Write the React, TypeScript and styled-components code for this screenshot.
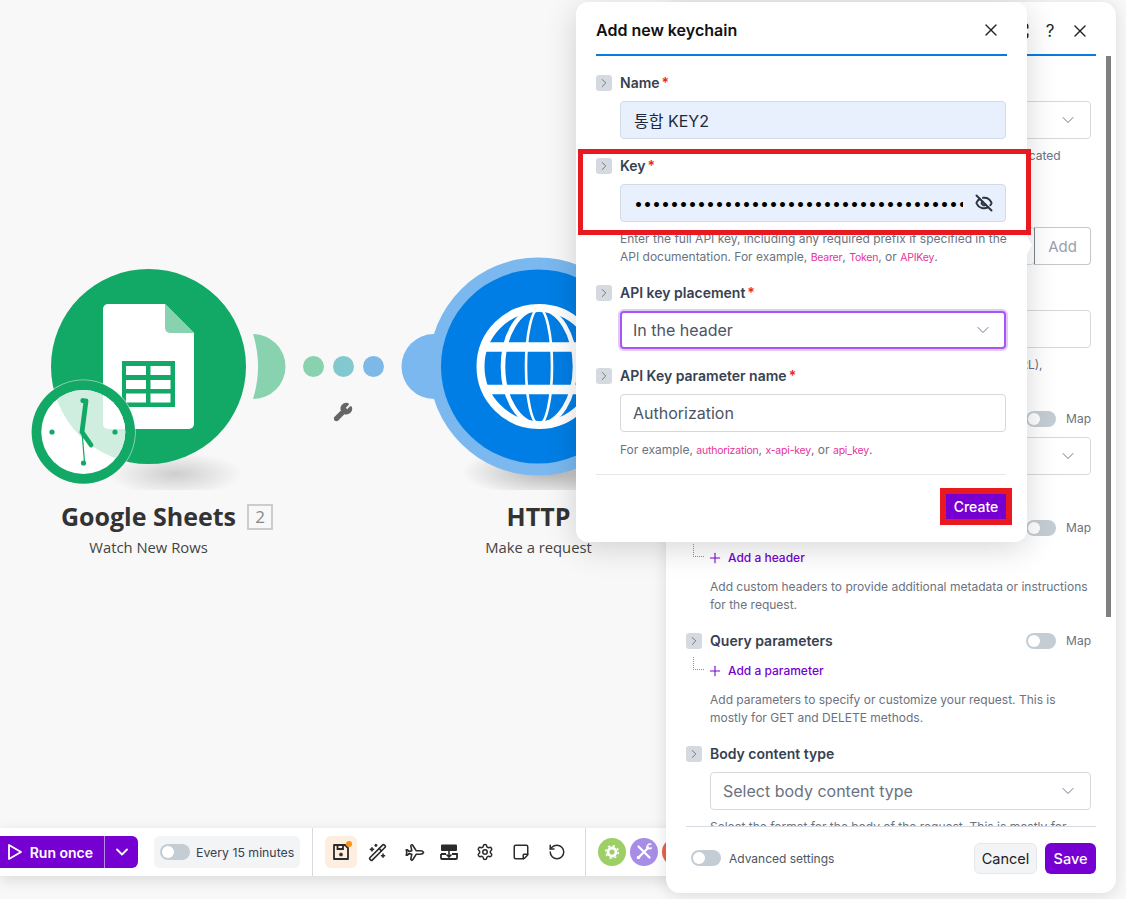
import { ReactNode } from "react";
import styled, { createGlobalStyle } from "styled-components";
import {
  ChevronDown,
  ChevronRight,
  EyeOff,
  Maximize,
  Plane,
  Plus,
  RotateCcw,
  Settings,
  StickyNote,
  WandSparkles,
  Wrench,
  X,
} from "lucide-react";

const purple = "#7600d1";

const GlobalStyle = createGlobalStyle`
  html, body {
    margin: 0;
    padding: 0;
    background: #f8f8f8;
    font-family: Inter, "Noto Sans CJK KR", sans-serif;
  }
`;

const SheetsArt = () => (
  <svg width="280" height="240" viewBox="20 250 280 240">
    <defs>
      <radialGradient id="nodeShadow">
        <stop offset="0%" stopColor="#000" stopOpacity="0.17" />
        <stop offset="100%" stopColor="#000" stopOpacity="0" />
      </radialGradient>
      <clipPath id="clockFace">
        <circle cx="83.3" cy="432" r="42" />
      </clipPath>
    </defs>
    <ellipse cx="175" cy="474" rx="68" ry="22" fill="url(#nodeShadow)" />
    <path d="M253 334 A32.5 32.5 0 0 1 253 399 A109.4 109.4 0 0 0 253 334 Z" fill="#88d2b0" />
    <circle cx="148.5" cy="366.5" r="97.5" fill="#12a865" />
    <path d="M108 304 H165 L194 333 V424 a5 5 0 0 1 -5 5 H108 a5 5 0 0 1 -5 -5 V309 a5 5 0 0 1 5 -5 Z" fill="#fff" />
    <path d="M165 304 L194 333 H170 a5 5 0 0 1 -5 -5 Z" fill="#88d2b0" />
    <rect x="122" y="361" width="53" height="46" fill="#12a865" />
    {[366, 380, 393.5].map((y) =>
      [126, 150.5].map((x) => <rect key={`${x}-${y}`} x={x} y={y} width="20" height="9" fill="#fff" />),
    )}
    <circle cx="83.3" cy="432" r="52.5" fill="#f8f8f8" opacity="0.6" />
    <circle cx="83.3" cy="432" r="51.7" fill="#12a865" />
    <circle cx="83.3" cy="432" r="42" fill="#fff" />
    <g clipPath="url(#clockFace)">
      <circle cx="148.5" cy="366.5" r="97.5" fill="#cfeee0" />
      <path d="M103 390 H194 V429 H108 a5 5 0 0 1 -5 -5 Z" fill="#fff" />
    </g>
    <g fill="#12a865">
      <circle cx="52" cy="432" r="2.6" />
      <circle cx="115" cy="432" r="2.6" />
      <circle cx="83.5" cy="463" r="2.6" />
      <circle cx="83" cy="400.5" r="2.6" />
    </g>
    <g stroke="#12a865" strokeLinecap="round" fill="none">
      <path d="M86 401 L82 432 L91 445" strokeWidth="4.8" />
      <path d="M82 432 L84.5 462" strokeWidth="1.2" />
    </g>
  </svg>
);

const HttpArt = () => (
  <svg width="220" height="240" viewBox="396 250 220 240">
    <defs>
      <radialGradient id="httpShadow">
        <stop offset="0%" stopColor="#000" stopOpacity="0.28" />
        <stop offset="100%" stopColor="#000" stopOpacity="0" />
      </radialGradient>
    </defs>
    <ellipse cx="550" cy="472" rx="88" ry="26" fill="url(#httpShadow)" />
    <circle cx="434" cy="366.5" r="32.5" fill="#7ab8ef" />
    <circle cx="538" cy="366.5" r="109" fill="#7ab8ef" />
    <circle cx="538" cy="366.5" r="97" fill="#007ee5" />
    <g fill="none" stroke="#fff">
      <circle cx="539" cy="366.5" r="58.5" strokeWidth="8" />
      <ellipse cx="539" cy="366.5" rx="13" ry="58" strokeWidth="2.6" />
      <ellipse cx="539" cy="366.5" rx="36" ry="58" strokeWidth="4.6" />
      <path d="M484 347 H594 M484 389.5 H594" strokeWidth="9.5" />
    </g>
  </svg>
);

const FloppyIcon = () => (
  <svg width="20" height="20" viewBox="0 0 20 20" fill="none" stroke="#2b2b2b" strokeWidth="1.8">
    <path d="M3 3 H14 L17 6 V17 H3 Z" strokeLinejoin="round" />
    <path d="M6.5 3 V7 H12 V3" />
    <circle cx="10" cy="12.5" r="1.6" fill="#2b2b2b" strokeWidth="0.6" />
  </svg>
);

const TrayIcon = () => (
  <svg width="20" height="20" viewBox="0 0 20 20" fill="none">
    <rect x="2" y="2.5" width="16" height="6.5" rx="1" fill="#2b2b2b" />
    <path d="M2 12 V16 a1 1 0 0 0 1 1 H17 a1 1 0 0 0 1 -1 V12 H13 M7 12 H2" stroke="#2b2b2b" strokeWidth="1.8" />
    <path d="M10 9 V14.5 M7.5 12.5 L10 15 L12.5 12.5" stroke="#2b2b2b" strokeWidth="1.6" />
  </svg>
);

const GearBadge = () => (
  <svg width="28" height="28" viewBox="0 0 28 28">
    <circle cx="14" cy="14" r="14" fill="#9ccf66" />
    <circle cx="14" cy="14" r="4" fill="none" stroke="#fff" strokeWidth="2.8" />
    <circle cx="14" cy="14" r="6.2" fill="none" stroke="#fff" strokeWidth="1.6" strokeDasharray="2.2 2.67" />
  </svg>
);

const ToolsBadge = () => (
  <svg width="28" height="28" viewBox="0 0 28 28">
    <circle cx="14" cy="14" r="14" fill="#a78de6" />
    <path d="M8.5 8.5 L19.5 19.5 M18.5 9.5 L9 19" stroke="#fff" strokeWidth="2.2" strokeLinecap="round" />
    <path d="M21.5 6.2 a3.4 3.4 0 0 0 -4.4 4.4 M21.8 9.5 a3.4 3.4 0 0 1 -3.4 1.2" fill="none" stroke="#fff" strokeWidth="1.4" />
    <circle cx="8.5" cy="19.5" r="1.8" fill="#fff" />
  </svg>
);

const Toggle = () => (
  <Track>
    <Knob />
  </Track>
);

const FieldHead = ({ label, required, map }: { label?: string; required?: boolean; map?: boolean }) => (
  <HeadRow>
    <ChevronBox>
      <ChevronRight size={14} strokeWidth={1.5} />
    </ChevronBox>
    <Label>
      {label}
      {required && <Star>*</Star>}
    </Label>
    {map && (
      <MapSwitch>
        <Toggle />
        <MapText>Map</MapText>
      </MapSwitch>
    )}
  </HeadRow>
);

const SelectBox = ({ children, focused }: { children?: ReactNode; focused?: boolean }) => (
  <Select $focused={focused}>
    <SelectText>{children}</SelectText>
    <ChevronDown size={20} strokeWidth={1.2} color="#6b7c8f" />
  </Select>
);

const AddRow = ({ text }: { text: string }) => (
  <AddLine>
    <Tree />
    <Plus size={16} color={purple} strokeWidth={1.6} />
    <AddText>{text}</AddText>
  </AddLine>
);

export default function App() {
  return (
    <>
      <GlobalStyle />
      <Stage>
        <NodeBox $x={20} $y={250}>
          <SheetsArt />
        </NodeBox>
        <NodeCaption $center={148.5}>
          <NodeTitle>
            Google Sheets
            <CountBadge>2</CountBadge>
          </NodeTitle>
          <NodeSub>Watch New Rows</NodeSub>
        </NodeCaption>

        <Dots>
          <Dot $color="#88d2b0" />
          <Dot $color="#82c8cf" />
          <Dot $color="#7db9e8" />
        </Dots>
        <WrenchMark>
          <Wrench size={20} color="#666" fill="#666" />
        </WrenchMark>

        <NodeBox $x={396} $y={250}>
          <HttpArt />
        </NodeBox>
        <NodeCaption $center={538.5}>
          <NodeTitle>HTTP</NodeTitle>
          <NodeSub>Make a request</NodeSub>
        </NodeCaption>

        <Toolbar>
          <RunGroup>
            <RunMain>
              <svg width="18" height="20" viewBox="0 0 18 20" fill="none">
                <path d="M3 3 L15 10 L3 17 Z" stroke="#fff" strokeWidth="1.8" strokeLinejoin="round" />
              </svg>
              Run once
            </RunMain>
            <RunCaret>
              <ChevronDown size={20} color="#fff" strokeWidth={2.2} />
            </RunCaret>
          </RunGroup>
          <ScheduleCard>
            <Toggle />
            <ScheduleText>Every 15 minutes</ScheduleText>
          </ScheduleCard>
          <BarDivider />
          <IconRow>
            <ToolIcon $active>
              <FloppyIcon />
              <OrangeDot />
            </ToolIcon>
            <ToolIcon>
              <WandSparkles size={19} color="#2b2b2b" />
            </ToolIcon>
            <ToolIcon>
              <RightPlane size={19} color="#2b2b2b" />
            </ToolIcon>
            <ToolIcon>
              <TrayIcon />
            </ToolIcon>
            <ToolIcon>
              <Settings size={18} color="#2b2b2b" />
            </ToolIcon>
            <ToolIcon>
              <FlippedNote size={18} color="#2b2b2b" />
            </ToolIcon>
            <ToolIcon>
              <RotateCcw size={18} color="#2b2b2b" />
            </ToolIcon>
          </IconRow>
          <BarDivider />
          <BadgeRow>
            <GearBadge />
            <ToolsBadge />
            <RedBadge />
          </BadgeRow>
        </Toolbar>

        <Panel>
          <PanelHeader>
            <Maximize size={18} color="#222" />
            <HelpMark>?</HelpMark>
            <X size={20} color="#222" strokeWidth={1.6} />
          </PanelHeader>
          <PanelBody>
            <Field $gap={17}>
              <FieldHead />
              <Indented>
                <SelectBox />
                <Help $lines={2}>Choose how your requests to the API should be authenticated</Help>
              </Indented>
            </Field>
            <Field>
              <FieldHead />
              <Indented>
                <InputGroup>
                  <Input readOnly value="" />
                  <AddButton>Add</AddButton>
                </InputGroup>
              </Indented>
            </Field>
            <Field>
              <FieldHead />
              <Indented>
                <Input readOnly value="" />
                <Help $lines={2}>Enter the full address of the API endpoint to request (URL),</Help>
              </Indented>
            </Field>
            <Field $gap={44}>
              <FieldHead map />
              <Indented>
                <SelectBox />
              </Indented>
            </Field>
            <Field>
              <FieldHead map />
              <AddRow text="Add a header" />
              <Indented>
                <Help $top={11}>Add custom headers to provide additional metadata or instructions for the request.</Help>
              </Indented>
            </Field>
            <Field>
              <FieldHead label="Query parameters" map />
              <AddRow text="Add a parameter" />
              <Indented>
                <Help $top={11}>Add parameters to specify or customize your request. This is mostly for GET and DELETE methods.</Help>
              </Indented>
            </Field>
            <Field>
              <FieldHead label="Body content type" />
              <Indented>
                <SelectBox>
                  <Placeholder>Select body content type</Placeholder>
                </SelectBox>
                <Help>Select the format for the body of the request. This is mostly for POST methods.</Help>
              </Indented>
            </Field>
          </PanelBody>
          <PanelFooter>
            <Toggle />
            <AdvancedText>Advanced settings</AdvancedText>
            <FooterButtons>
              <CancelButton>Cancel</CancelButton>
              <SaveButton>Save</SaveButton>
            </FooterButtons>
          </PanelFooter>
          <Scrollbar />
        </Panel>

        <Dialog>
          <DialogHeader>
            <DialogTitle>Add new keychain</DialogTitle>
            <X size={20} color="#222" strokeWidth={1.6} />
          </DialogHeader>
          <DialogBody>
            <Field>
              <FieldHead label="Name" required />
              <Indented>
                <Input $filled readOnly value="통합 KEY2" />
              </Indented>
            </Field>
            <Field>
              <Marked>
                <FieldHead label="Key" required />
                <Indented>
                  <KeyWrap>
                    <KeyInput type="password" readOnly value={"x".repeat(60)} />
                    <EyeMark>
                      <EyeOff size={18} color="#2b3440" strokeWidth={2.6} />
                    </EyeMark>
                  </KeyWrap>
                </Indented>
                <KeyHighlight />
              </Marked>
              <Indented>
                <KeyHelp>
                  Enter the full API key, including any required prefix if specified in the API documentation. For example,{" "}
                  <Code>Bearer</Code>, <Code>Token</Code>, or <Code>APIKey</Code>.
                </KeyHelp>
              </Indented>
            </Field>
            <Field>
              <FieldHead label="API key placement" required />
              <Indented>
                <SelectBox focused>In the header</SelectBox>
              </Indented>
            </Field>
            <Field $gap={15}>
              <FieldHead label="API Key parameter name" required />
              <Indented>
                <Input readOnly value="Authorization" />
                <Help $top={9}>
                  For example, <Code>authorization</Code>, <Code>x-api-key</Code>, or <Code>api_key</Code>.
                </Help>
              </Indented>
            </Field>
          </DialogBody>
          <DialogFooter>
            <CreateButton>
              Create
              <CreateHighlight />
            </CreateButton>
          </DialogFooter>
          <Notch />
        </Dialog>
      </Stage>
    </>
  );
}

const Stage = styled.div`
  position: relative;
  width: 1126px;
  height: 899px;
  overflow: hidden;
  background: #f8f8f8;
`;

const NodeBox = styled.div<{ $x: number; $y: number }>`
  position: absolute;
  left: ${(p) => p.$x}px;
  top: ${(p) => p.$y}px;
  line-height: 0;
`;

const NodeCaption = styled.div<{ $center: number }>`
  position: absolute;
  left: ${(p) => p.$center - 150}px;
  top: 498px;
  width: 300px;
  text-align: center;
  font-family: "Open Sans", sans-serif;
  color: #333;
`;

const NodeTitle = styled.div`
  position: relative;
  display: inline-block;
  font-size: 25px;
  font-weight: 700;
  line-height: 36px;
`;

const CountBadge = styled.span`
  position: absolute;
  left: calc(100% + 11px);
  top: 6px;
  width: 22px;
  height: 22px;
  border: 2px solid #ccc;
  font-size: 17px;
  font-weight: 400;
  line-height: 22px;
  color: #888;
`;

const NodeSub = styled.div`
  margin-top: 3px;
  font-size: 14.8px;
  line-height: 20px;
  color: #444;
`;

const Dots = styled.div`
  position: absolute;
  left: 302.5px;
  top: 356px;
  display: flex;
  gap: 9px;
`;

const Dot = styled.span<{ $color: string }>`
  width: 21px;
  height: 21px;
  border-radius: 50%;
  background: ${(p) => p.$color};
`;

const WrenchMark = styled.div`
  position: absolute;
  left: 333px;
  top: 402px;
  line-height: 0;
`;

const Toolbar = styled.div`
  position: absolute;
  left: 0;
  top: 828px;
  width: 720px;
  height: 48px;
  display: flex;
  align-items: center;
  background: #fff;
  box-shadow: 0 4px 14px rgba(0, 0, 0, 0.12);
`;

const RunGroup = styled.div`
  display: flex;
  width: 138px;
  height: 32px;
  border-radius: 0 6px 6px 0;
  background: ${purple};
  color: #fff;
`;

const RunMain = styled.div`
  width: 105px;
  display: flex;
  align-items: center;
  justify-content: flex-end;
  gap: 6px;
  padding-right: 11px;
  box-sizing: border-box;
  border-right: 1px solid #b98ae6;
  font-size: 14px;
  font-weight: 600;
`;

const RunCaret = styled.div`
  flex: 1;
  display: flex;
  align-items: center;
  justify-content: center;
`;

const ScheduleCard = styled.div`
  display: flex;
  align-items: center;
  gap: 6px;
  width: 146px;
  height: 32px;
  margin-left: 16px;
  padding-left: 6px;
  box-sizing: border-box;
  border-radius: 6px;
  background: #f3f4f6;
`;

const ScheduleText = styled.span`
  font-size: 12.3px;
  color: #374151;
  white-space: nowrap;
`;

const BarDivider = styled.div`
  width: 1px;
  height: 48px;
  margin-left: 12px;
  background: #d5dae0;
`;

const IconRow = styled.div`
  display: flex;
  gap: 4px;
  margin-left: 12px;
`;

const ToolIcon = styled.div<{ $active?: boolean }>`
  position: relative;
  width: 32px;
  height: 32px;
  display: flex;
  align-items: center;
  justify-content: center;
  border-radius: 6px;
  background: ${(p) => (p.$active ? "#fdeee0" : "transparent")};
`;

const RightPlane = styled(Plane)`
  transform: rotate(45deg);
`;

const FlippedNote = styled(StickyNote)`
  transform: scaleY(-1);
`;

const OrangeDot = styled.span`
  position: absolute;
  right: 5px;
  top: 5px;
  width: 6px;
  height: 6px;
  border-radius: 50%;
  background: #f7931e;
`;

const BadgeRow = styled.div`
  display: flex;
  gap: 4px;
  margin-left: 12px;
`;

const RedBadge = styled.span`
  width: 28px;
  height: 28px;
  border-radius: 50%;
  background: #e8634a;
`;

const Panel = styled.div`
  position: absolute;
  left: 666px;
  top: 2px;
  width: 450px;
  height: 891px;
  display: flex;
  flex-direction: column;
  border-radius: 14px;
  background: #fff;
  box-shadow: 0 2px 16px rgba(0, 0, 0, 0.12);
`;

const PanelHeader = styled.div`
  flex: none;
  height: 54px;
  margin: 0 20px;
  padding: 5px 6px 0 0;
  box-sizing: border-box;
  display: flex;
  align-items: center;
  justify-content: flex-end;
  gap: 12px;
  border-bottom: 2px solid #0a7bdc;
`;

const HelpMark = styled.span`
  width: 16px;
  text-align: center;
  font-size: 17px;
  font-weight: 400;
  color: #222;
`;

const PanelBody = styled.div`
  flex: 1;
  min-height: 0;
  overflow: hidden;
  padding: 18px 25px 0 20px;
`;

const Scrollbar = styled.div`
  position: absolute;
  right: 5px;
  top: 54px;
  width: 5px;
  height: 561px;
  background: #808080;
`;

const PanelFooter = styled.div`
  flex: none;
  height: 67px;
  margin: 0 20px;
  padding: 0 0 4px 5px;
  display: flex;
  align-items: center;
  box-sizing: border-box;
  border-top: 1px solid #d5dae0;
`;

const AdvancedText = styled.span`
  margin-left: 8px;
  font-size: 12px;
  color: #4b5563;
`;

const FooterButtons = styled.div`
  margin-left: auto;
  display: flex;
  gap: 8px;
`;

const CancelButton = styled.button`
  height: 31px;
  width: 63px;
  padding: 0;
  border: 1px solid #e5e7eb;
  border-radius: 6px;
  background: #f3f4f6;
  font-family: inherit;
  font-size: 14.5px;
  color: #222;
`;

const SaveButton = styled.button`
  height: 31px;
  width: 51px;
  padding: 0;
  border: 0;
  border-radius: 6px;
  background: ${purple};
  font-family: inherit;
  font-size: 14.5px;
  font-weight: 500;
  color: #fff;
`;

const Dialog = styled.div`
  position: absolute;
  left: 576px;
  top: 2px;
  width: 451px;
  height: 540px;
  border-radius: 12px;
  background: #fff;
  box-shadow: 0 6px 32px rgba(0, 0, 0, 0.16);
`;

const DialogHeader = styled.div`
  height: 54px;
  margin: 0 20px;
  padding: 4px 6px 0 0;
  box-sizing: border-box;
  display: flex;
  align-items: center;
  justify-content: space-between;
  border-bottom: 2px solid #0a7bdc;
`;

const DialogTitle = styled.div`
  font-size: 16px;
  font-weight: 600;
  color: #111;
`;

const DialogBody = styled.div`
  padding: 18px 21px 0 20px;
`;

const DialogFooter = styled.div`
  margin: 0 21px 0 20px;
  padding-top: 19px;
  display: flex;
  justify-content: flex-end;
  border-top: 1px solid #e5e7eb;
`;

const Notch = styled.span`
  position: absolute;
  left: 451px;
  top: 234px;
  border-left: 5px solid #fff;
  border-top: 9px solid transparent;
  border-bottom: 9px solid transparent;
`;

const Field = styled.div<{ $gap?: number }>`
  margin-bottom: ${(p) => p.$gap ?? 18}px;
`;

const Marked = styled.div`
  position: relative;
`;

const KeyHighlight = styled.div`
  position: absolute;
  left: -18px;
  right: -25px;
  top: -8px;
  bottom: -13px;
  border: 5.5px solid #e8191f;
  pointer-events: none;
`;

const HeadRow = styled.div`
  height: 18px;
  display: flex;
  align-items: center;
`;

const ChevronBox = styled.span`
  width: 16px;
  height: 16px;
  margin-right: 8px;
  display: flex;
  align-items: center;
  justify-content: center;
  border-radius: 3px;
  background: #d5dae0;
  color: #5f6b78;
`;

const Label = styled.span`
  padding-bottom: 2px;
  font-size: 14px;
  font-weight: 600;
  color: #374151;
`;

const Star = styled.span`
  margin-left: 2px;
  color: #f0222a;
`;

const MapSwitch = styled.span`
  margin-left: auto;
  display: flex;
  align-items: center;
  gap: 10px;
`;

const MapText = styled.span`
  padding-bottom: 2px;
  font-size: 12px;
  color: #6b7280;
`;

const Track = styled.span`
  flex: none;
  display: block;
  width: 30px;
  height: 16px;
  border-radius: 8px;
  background: #c4ccd4;
`;

const Knob = styled.span`
  display: block;
  width: 12px;
  height: 12px;
  margin: 2px;
  border-radius: 50%;
  background: #fff;
`;

const Indented = styled.div`
  margin-left: 24px;
`;

const Input = styled.input<{ $filled?: boolean }>`
  display: block;
  width: 100%;
  height: 38px;
  margin-top: 9px;
  padding: 0 ${(p) => (p.$filled ? 13 : 12)}px;
  box-sizing: border-box;
  border: 1px solid ${(p) => (p.$filled ? "#d3dbe6" : "#d5d8dc")};
  border-radius: 4px;
  outline: none;
  background: ${(p) => (p.$filled ? "#e8f0fe" : "#fff")};
  font-family: Inter, "Noto Sans CJK KR", sans-serif;
  font-size: 16px;
  color: ${(p) => (p.$filled ? "#1f2937" : "#4b5563")};
`;

const KeyWrap = styled.div`
  position: relative;
`;

const KeyInput = styled(Input).attrs({ $filled: true })`
  padding-right: 42px;
  color: #000;
`;

const EyeMark = styled.span`
  position: absolute;
  right: 13px;
  top: 10px;
  line-height: 0;
`;

const InputGroup = styled.div`
  display: flex;
  align-items: flex-start;
`;

const AddButton = styled.div`
  flex: none;
  width: 57px;
  height: 38px;
  margin-top: 9px;
  margin-left: -1px;
  box-sizing: border-box;
  display: flex;
  align-items: center;
  justify-content: center;
  border: 1px solid #c4c8cd;
  border-left-color: #7d858e;
  border-radius: 0 4px 4px 0;
  font-size: 15px;
  color: #9aa1a9;
`;

const Select = styled.div<{ $focused?: boolean }>`
  height: 38px;
  margin-top: 9px;
  padding: 0 ${(p) => (p.$focused ? 11 : 12)}px;
  box-sizing: border-box;
  display: flex;
  align-items: center;
  justify-content: space-between;
  border: ${(p) => (p.$focused ? "2px solid #a855f7" : "1px solid #d5d8dc")};
  border-radius: 4px;
  box-shadow: ${(p) => (p.$focused ? "0 0 0 2px #e3c9f7" : "none")};
  background: #fff;
`;

const SelectText = styled.span`
  font-size: 16px;
  color: #4b5563;
`;

const Placeholder = styled.span`
  color: #6b7280;
`;

const Help = styled.div<{ $top?: number; $lines?: number }>`
  margin-top: ${(p) => p.$top ?? 8}px;
  min-height: ${(p) => (p.$lines ?? 1) * 18}px;
  font-size: 12px;
  line-height: 18px;
  color: #6b7280;
`;

const KeyHelp = styled(Help)`
  margin-right: -6px;
`;

const Code = styled.span`
  font-size: 10.5px;
  line-height: 1;
  letter-spacing: -0.2px;
  color: #e6339a;
`;

const AddLine = styled.div`
  position: relative;
  height: 18px;
  margin-top: 12px;
  margin-left: 21px;
  display: flex;
  align-items: center;
  gap: 4px;
`;

const Tree = styled.span`
  position: absolute;
  left: -14px;
  top: -5px;
  width: 10px;
  height: 12px;
  border-left: 1px dotted #8a94a0;
  border-bottom: 1px dotted #8a94a0;
`;

const AddText = styled.span`
  margin-left: 1px;
  padding-bottom: 1px;
  font-size: 12px;
  font-weight: 500;
  color: ${purple};
`;

const CreateButton = styled.button`
  position: relative;
  width: 60px;
  height: 25px;
  padding: 0;
  border: 0;
  background: ${purple};
  font-family: inherit;
  font-size: 14px;
  font-weight: 500;
  color: #fff;
`;

const CreateHighlight = styled.span`
  position: absolute;
  inset: -6px;
  border: 6px solid #e8191f;
`;
